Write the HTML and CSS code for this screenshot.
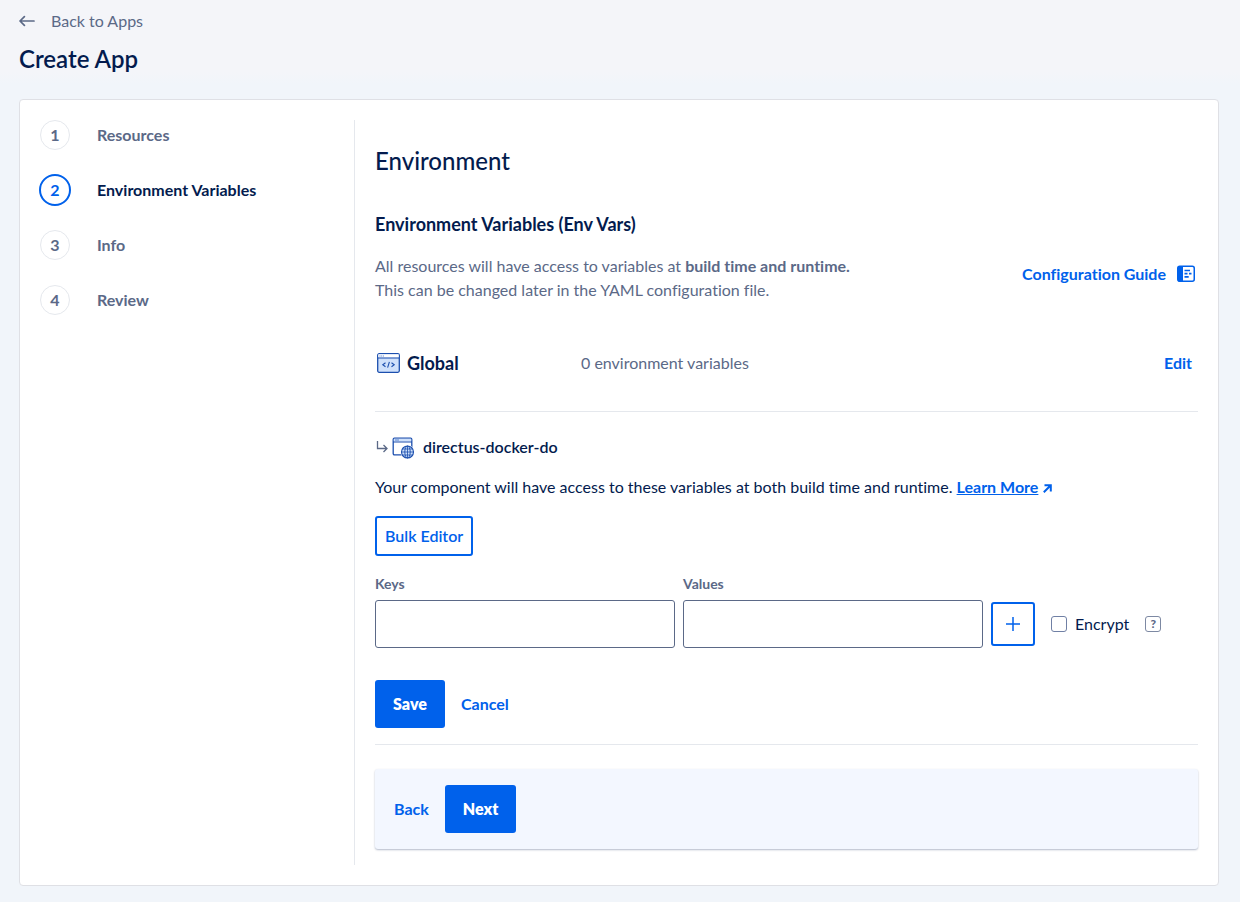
FILE: index.html
```html
<!DOCTYPE html>
<html lang="en">
<head>
<meta charset="utf-8">
<meta name="viewport" content="width=device-width, initial-scale=1">
<title>Create App</title>
<link rel="stylesheet" href="styles.css">
</head>
<body>
<header class="page-header">
  <a class="back-link" href="#">
    <svg width="16" height="12" viewBox="0 0 16 12" fill="none" stroke="currentColor" stroke-width="1.7" stroke-linecap="round" stroke-linejoin="round" aria-hidden="true"><path d="M15 6H1.2M5.400 1.600 1 6l4.400 4.400"/></svg>
    <span>Back to Apps</span>
  </a>
  <h1 class="page-title">Create App</h1>
</header>
<main class="card">
  <nav class="sidebar" aria-label="Steps">
    <ol class="steps">
      <li class="step"><span class="step-number">1</span><span>Resources</span></li>
      <li class="step step-active" aria-current="step"><span class="step-number">2</span><span>Environment Variables</span></li>
      <li class="step"><span class="step-number">3</span><span>Info</span></li>
      <li class="step"><span class="step-number">4</span><span>Review</span></li>
    </ol>
  </nav>
  <section class="content">
    <h2 class="section-title">Environment</h2>
    <h3 class="subsection-title">Environment Variables (Env Vars)</h3>
    <div class="intro">
      <p class="intro-text">All resources will have access to variables at <strong>build time and runtime.</strong><br>This can be changed later in the YAML configuration file.</p>
      <a class="link guide-link" href="#">Configuration Guide
        <svg width="20" height="18" viewBox="0 0 20 18" aria-hidden="true"><rect x="1.750" y="1.250" width="16.500" height="15" rx="2" fill="#fff" stroke="#0061eb" stroke-width="1.500"/><path d="M2 1h5v15.500H2z" fill="#0061eb"/><path d="M8.500 5.500H14M8.500 8.700h3M13 8.700h2.500M8.500 11.900h4.200" stroke="#0061eb" stroke-width="1.700"/></svg>
      </a>
    </div>
    <div class="global-row">
      <h4 class="global-name">
        <svg width="23" height="20" viewBox="0 0 23 20" fill="none" aria-hidden="true"><rect x=".7" y=".7" width="21.600" height="18.600" rx="1.500" fill="#cfe1fb" stroke="#1c4fae" stroke-width="1.300"/><path d="M1.300 1.300h20.400V4.500H1.300z" fill="#fff"/><path d="M1 5h21" stroke="#1c4fae"/><path d="M2.500 3H7" stroke="#5b84cf" stroke-dasharray="1 .7"/><path d="m8.500 9.800-2.700 2 2.700 2M14.500 9.800l2.700 2-2.700 2M12.400 8.900l-1.800 5.800" stroke="#1c4fae" stroke-width="1.100"/></svg>
        Global
      </h4>
      <span class="global-count">0 environment variables</span>
      <a class="link edit-link" href="#">Edit</a>
    </div>
    <div class="component">
      <h4 class="component-name">
        <svg class="branch-icon" width="12" height="14" viewBox="0 0 12 14" fill="none" stroke="#5b6987" stroke-width="1.300" aria-hidden="true"><path d="M1.500 1v7.500H11M7.500 5l3.500 3.500L7.500 12"/></svg>
        <svg width="23" height="24" viewBox="0 0 23 24" fill="none" aria-hidden="true"><rect x="1.200" y="3.200" width="18.600" height="16.600" rx="1.200" fill="#fff" stroke="#1c4fae" stroke-width="1.300"/><path d="M1.800 3.800h17.400V6.500H1.800z" fill="#cfe1fb"/><path d="M1 7h19" stroke="#1c4fae"/><path d="M3 5h4" stroke="#5b84cf"/><circle cx="15.500" cy="17" r="7" fill="#fff"/><circle cx="15.500" cy="17" r="6" fill="#cfe1fb" stroke="#1c4fae" stroke-width="1.100"/><ellipse cx="15.500" cy="17" rx="2.700" ry="6" stroke="#1c4fae" stroke-width=".9"/><path d="M15.500 11v12M9.500 17h12M10.500 14h10M10.500 20h10" stroke="#1c4fae" stroke-width=".8"/></svg>
        directus-docker-do
      </h4>
      <p class="component-text">Your component will have access to these variables at both build time and runtime.
        <a class="link learn-link" href="#">Learn More</a>
        <svg width="9" height="9" viewBox="0 0 9 9" fill="none" stroke="#0061eb" stroke-width="2" aria-hidden="true"><path d="M1.500 1.200h6.300v6.300M7.500 1.500.8 8.200"/></svg>
      </p>
      <button class="button button-outline" type="button">Bulk Editor</button>
      <form class="variables">
        <div class="fields">
          <div class="field">
            <label class="field-label" for="key">Keys</label>
            <input class="field-input" id="key" type="text">
          </div>
          <div class="field">
            <label class="field-label" for="value">Values</label>
            <input class="field-input" id="value" type="text">
          </div>
          <div class="field-extras">
            <button class="button-add" type="button" aria-label="Add variable"><svg width="14" height="14" viewBox="0 0 14 14" fill="none" stroke="currentColor" stroke-width="1.500" aria-hidden="true"><path d="M7 0v14M0 7h14"/></svg></button>
            <label class="encrypt" for="encrypt"><input class="checkbox" id="encrypt" type="checkbox">Encrypt</label>
            <button class="help" type="button">?</button>
          </div>
        </div>
        <div class="actions">
          <button class="button button-primary" type="submit">Save</button>
          <button class="button button-text" type="button">Cancel</button>
        </div>
      </form>
    </div>
    <footer class="wizard-nav">
      <button class="button button-text" type="button">Back</button>
      <button class="button button-primary" type="button">Next</button>
    </footer>
  </section>
</main>
</body>
</html>
```
FILE: styles.css
```css
*, *::before, *::after { box-sizing: border-box; }

body {
  margin: 0;
  padding: 0 21px 16px 19px;
  background: #f1f5fa linear-gradient(#f4f5f9, #f4f5f9 72px, #f1f5fa 84px) no-repeat;
  color: #031b4e;
  font-family: Lato, "Liberation Sans", sans-serif;
  font-size: 16px;
  line-height: 24px;
  font-variant-ligatures: none;
}

h1, h2, h3, h4, p, ol { margin: 0; padding: 0; }
button, input { font: inherit; margin: 0; }
button { cursor: pointer; }
svg { flex: none; }
strong { font-weight: 700; }

.page-header { padding: 9px 0 24px; }

.back-link {
  display: inline-flex;
  align-items: center;
  gap: 16px;
  color: #5b6987;
  text-decoration: none;
}

.page-title {
  margin-top: 10px;
  font-size: 24px;
  line-height: 32px;
  font-weight: 600;
}

.card {
  display: flex;
  padding: 20px;
  background: #fff;
  border: 1px solid #dfe0e5;
  border-radius: 4px;
}

.sidebar {
  flex: 0 0 315px;
  border-right: 1px solid #e5e8ed;
}

.steps {
  display: grid;
  gap: 25px;
  list-style: none;
}

.step {
  display: flex;
  align-items: center;
  gap: 27px;
  color: #5b6987;
  font-weight: 700;
}

.step-number {
  display: grid;
  place-items: center;
  width: 30px;
  height: 30px;
  border: 1px solid #e5e8ed;
  border-radius: 50%;
  line-height: 28px;
}

.step-active { color: #031b4e; }

.step-active .step-number {
  width: 32px;
  height: 32px;
  margin: -1px;
  color: #0061eb;
  border: 2px solid #0061eb;
}

.content {
  flex: 1;
  min-width: 0;
  padding: 25px 0 16px 20px;
}

.section-title {
  font-size: 24px;
  line-height: 32px;
  font-weight: 500;
}

.subsection-title {
  margin-top: 35px;
  font-size: 18px;
  font-weight: 700;
}

.link {
  color: #0061eb;
  font-weight: 700;
  text-decoration: none;
}

.intro {
  display: flex;
  align-items: center;
  justify-content: space-between;
  margin-top: 18px;
}

.intro-text { color: #5b6987; }

.guide-link {
  display: flex;
  align-items: center;
  gap: 10px;
  padding: 0 2px 8px 0;
}

.global-row {
  display: flex;
  align-items: center;
  margin-top: 49px;
  padding-bottom: 36px;
  border-bottom: 1px solid #e5e8ed;
}

.global-name {
  display: flex;
  flex: 0 0 206px;
  align-items: center;
  gap: 7px;
  padding-left: 2px;
  font-size: 18px;
  font-weight: 700;
}

.global-count {
  flex: 1;
  color: #5b6987;
}

.edit-link { padding-right: 6px; }

.component {
  padding: 23px 0 16px;
  border-bottom: 1px solid #e5e8ed;
}

.component-name {
  display: flex;
  align-items: center;
  gap: 8px;
  padding-left: 1px;
  font-size: 16px;
  font-weight: 600;
}

.branch-icon { margin-right: -4px; }

.component-text {
  margin: 16px 0 17px;
}

.learn-link { text-decoration: underline; }

.button {
  height: 48px;
  padding: 0 18px 1px;
  border: 0;
  border-radius: 3px;
  background: none;
  color: #0061eb;
  font-weight: 700;
}

.button-outline {
  height: 40px;
  padding: 0 8px 1px;
  border: 2px solid #0061eb;
  background: #fff;
  font-weight: 600;
}

.button-primary {
  min-width: 70px;
  background: #0061eb;
  color: #fff;
  font-weight: 800;
}

.button-text { padding: 0 16px 1px; }

.variables { margin-top: 16px; }

.fields {
  display: flex;
  align-items: flex-end;
  gap: 8px;
}

.field {
  display: grid;
  flex: 0 1 300px;
  gap: 4px;
  min-width: 0;
}

.field-label {
  color: #5b6987;
  font-size: 14px;
  font-weight: 700;
}

.field-input {
  width: 100%;
  height: 48px;
  padding: 0 12px;
  border: 1px solid #5b6987;
  border-radius: 3px;
  background: #fff;
}

.field-extras {
  display: flex;
  align-items: center;
  gap: 16px;
  height: 48px;
}

.button-add {
  display: grid;
  place-items: center;
  width: 44px;
  height: 44px;
  padding: 0 0 1px;
  border: 2px solid #0061eb;
  border-radius: 3px;
  background: #fff;
  color: #0061eb;
}

.encrypt {
  display: flex;
  align-items: center;
  gap: 8px;
}

.checkbox {
  width: 16px;
  height: 16px;
  appearance: none;
  border: 1px solid #7080a5;
  border-radius: 3px;
  background: #fff;
}

.checkbox:checked { background: #0061eb; }

.help {
  display: grid;
  place-items: center;
  width: 16px;
  height: 16px;
  padding: 0;
  border: 1px solid #7d89a3;
  border-radius: 3px;
  background: #fff;
  color: #5b6987;
  font-size: 12px;
  line-height: 14px;
  font-weight: 900;
}

.actions {
  display: flex;
  margin-top: 32px;
}

.wizard-nav {
  display: flex;
  margin-top: 24px;
  padding: 16px 3px;
  border-radius: 3px;
  background: #f3f7ff;
  box-shadow: 0 1px 2px rgba(3, 27, 78, 0.300);
}
```
